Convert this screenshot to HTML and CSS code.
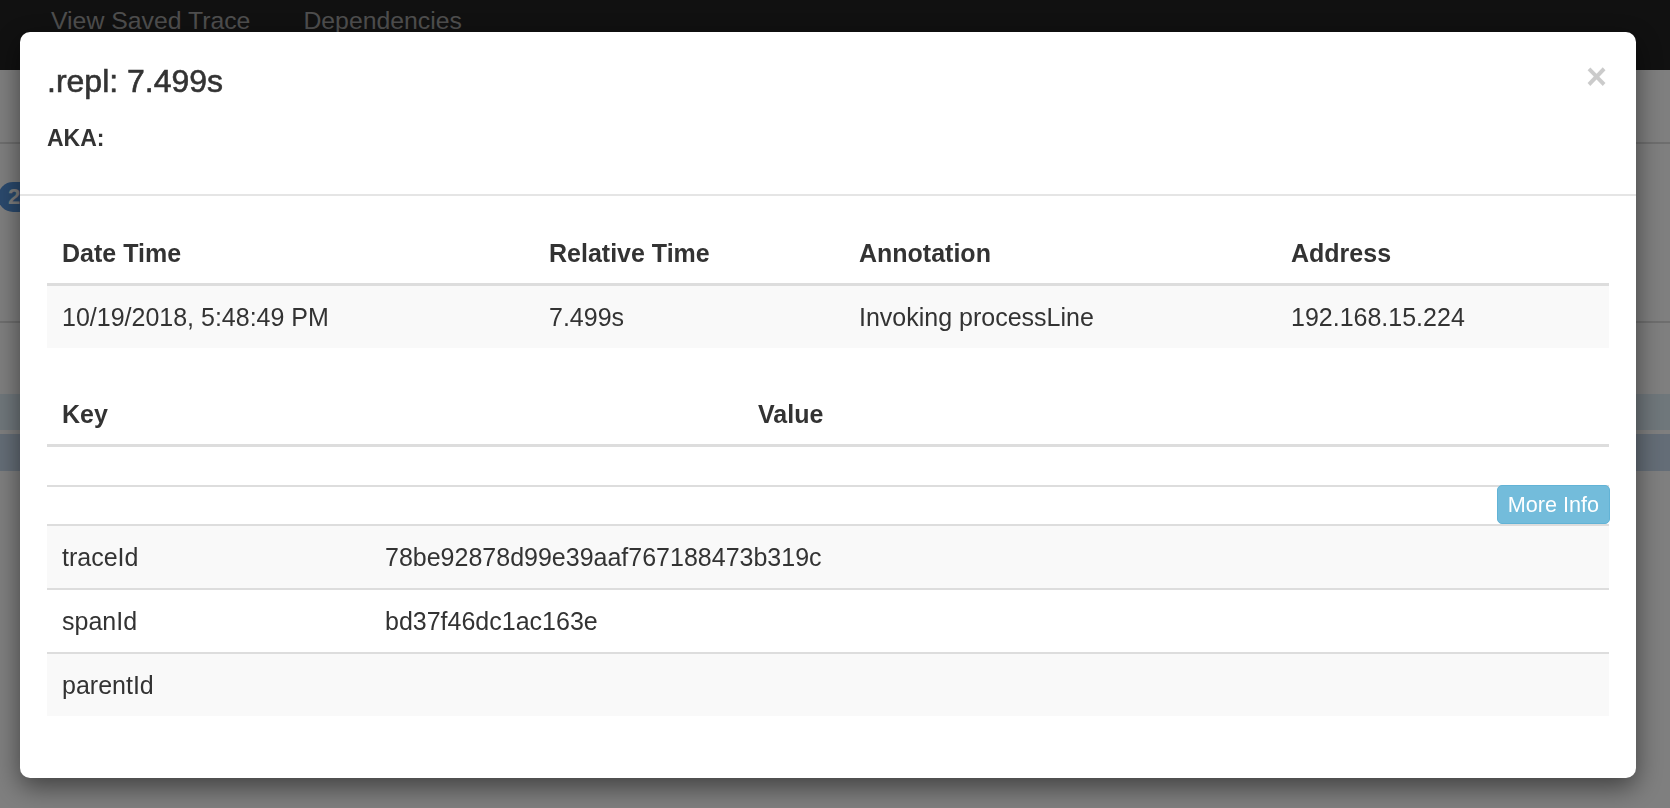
FILE: index.html
```html
<!DOCTYPE html>
<html lang="en">
<head>
<meta charset="utf-8">
<title>Span details</title>
<link rel="stylesheet" href="styles.css">
</head>
<body>
<div class="page">
  <nav class="navbar">
    <a class="nav-link">View Saved Trace</a>
    <a class="nav-link">Dependencies</a>
  </nav>
  <div class="toolbar"></div>
  <div class="summary">
    <span class="badge">2</span>
  </div>
  <div class="bands">
    <div class="band band-a"></div>
    <div class="band band-b"></div>
  </div>
</div>
<div class="backdrop"></div>
<div class="modal">
  <div class="modal-header">
    <div class="titles">
      <h4 class="modal-title">.repl: 7.499s</h4>
      <h5 class="aka">AKA:</h5>
    </div>
    <button class="close" type="button">×</button>
  </div>
  <div class="modal-body">
    <table class="tbl striped">
      <colgroup>
        <col class="c-date"><col class="c-rel"><col class="c-ann"><col class="c-addr">
      </colgroup>
      <thead>
        <tr><th>Date Time</th><th>Relative Time</th><th>Annotation</th><th>Address</th></tr>
      </thead>
      <tbody>
        <tr><td>10/19/2018, 5:48:49 PM</td><td>7.499s</td><td>Invoking processLine</td><td>192.168.15.224</td></tr>
      </tbody>
    </table>
    <table class="tbl tbl-kv">
      <colgroup><col class="c-key"><col class="c-value"></colgroup>
      <thead>
        <tr><th>Key</th><th>Value</th></tr>
      </thead>
      <tbody>
        <tr class="empty-row"><td></td><td></td></tr>
        <tr class="btn-row"><td colspan="2"><div class="btn-wrap"><button class="btn-info" type="button">More Info</button></div></td></tr>
      </tbody>
    </table>
    <table class="tbl striped tbl-ids">
      <colgroup><col class="c-idkey"><col class="c-idval"></colgroup>
      <tbody>
        <tr><td>traceId</td><td>78be92878d99e39aaf767188473b319c</td></tr>
        <tr><td>spanId</td><td>bd37f46dc1ac163e</td></tr>
        <tr><td>parentId</td><td></td></tr>
      </tbody>
    </table>
  </div>
</div>
</body>
</html>
```
FILE: styles.css
```css
* { box-sizing: border-box; }
html, body { margin: 0; padding: 0; height: 100%; }
body {
  font-family: "Liberation Sans", Arial, Helvetica, sans-serif;
  color: #333;
  background: #fff;
  overflow: hidden;
}

/* background page */
.navbar {
  height: 70px;
  background: #222;
  display: flex;
  align-items: flex-start;
  padding-left: 51px;
}
.nav-link {
  color: #9d9d9d;
  font-size: 24.8px;
  line-height: 36px;
  margin-top: 3px;
  margin-right: 53px;
}
.toolbar {
  height: 74px;
  border-bottom: 2px solid #ddd;
}
.summary {
  height: 179px;
  padding-top: 38px;
  border-bottom: 2px solid #ddd;
}
.badge {
  display: inline-block;
  margin-left: -2px;
  height: 30px;
  width: 60px;
  border-radius: 15px;
  background: #5694dc;
  color: #fff;
  font-weight: bold;
  font-size: 22px;
  line-height: 30px;
  padding-left: 10px;
}
.bands { padding-top: 71px; }
.band { height: 36px; }
.band-a { background: #dfeef7; }
.band-b { background: #c9dbee; margin-top: 4px; height: 37px; }

.backdrop {
  position: fixed;
  inset: 0;
  background: rgba(0, 0, 0, 0.5);
}

/* modal */
.modal {
  position: fixed;
  left: 20px;
  top: 32px;
  width: 1616px;
  background: #fff;
  border-radius: 10px;
  box-shadow: 0 9px 27px rgba(0, 0, 0, 0.5);
}
.modal-header {
  display: flex;
  justify-content: space-between;
  align-items: flex-start;
  padding: 27px;
  border-bottom: 2px solid #e5e5e5;
}
.modal-title {
  margin: 4px 0 0;
  font-size: 32px;
  line-height: 36px;
  font-weight: normal;
  color: #333;
  -webkit-text-stroke: 0.6px #333;
}
.aka {
  margin: 25px 0 15px;
  font-size: 23px;
  line-height: 28px;
  font-weight: bold;
}
.close {
  border: 0;
  background: transparent;
  padding: 0;
  margin: 0 2px 0 0;
  font-family: "Liberation Sans", Arial, sans-serif;
  font-size: 36px;
  line-height: 36px;
  font-weight: bold;
  color: #000;
  opacity: 0.2;
  cursor: pointer;
}
.modal-body { padding: 27px; }

/* tables */
.tbl {
  width: 100%;
  border-collapse: separate;
  border-spacing: 0;
  table-layout: fixed;
  font-size: 25px;
  margin-bottom: 36px;
}
.tbl th, .tbl td {
  padding: 13px 15px;
  line-height: 36px;
  text-align: left;
  vertical-align: top;
  border-top: 2px solid #ddd;
}
.tbl thead th {
  padding: 12px 15px;
  border-top: 0;
  border-bottom: 3px solid #ddd;
  font-weight: bold;
}
.tbl thead + tbody tr:first-child td { border-top: 0; }
.striped tbody tr:nth-child(odd) td { background: #f9f9f9; }

.c-date { width: 487px; }
.c-rel { width: 310px; }
.c-ann { width: 432px; }
.c-addr { width: 333px; }
.c-key { width: 696px; }
.c-value { width: 866px; }
.c-idkey { width: 323px; }
.c-idval { width: 1239px; }

.tbl-kv { margin-bottom: 0; }
.tbl-kv .empty-row td { padding: 0; height: 38px; }
.tbl-kv .btn-row td { padding: 0; }
.btn-wrap {
  display: flex;
  justify-content: flex-end;
  height: 37px;
}
.btn-info {
  margin-top: -2px;
  margin-right: -1px;
  height: 39px;
  padding: 2px 10px;
  font-family: "Liberation Sans", Arial, sans-serif;
  font-size: 21.6px;
  line-height: 33px;
  color: #fff;
  background: #73bcdb;
  border: 1px solid #62b3d6;
  border-radius: 5px;
  cursor: pointer;
}
.tbl-ids { margin-bottom: 35px; }
```
